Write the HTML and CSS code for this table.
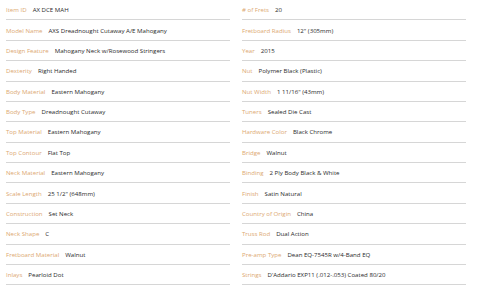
FILE: index.html
```html
<!DOCTYPE html>
<html>
<head>
<meta charset="utf-8">
<link rel="stylesheet" href="styles.css">
</head>
<body>
<div class="specs">
  <div class="col">
    <div class="row"><span class="label">Item ID</span><span class="value">AX DCE MAH</span></div>
    <div class="row"><span class="label">Model Name</span><span class="value">AXS Dreadnought Cutaway A/E Mahogany</span></div>
    <div class="row"><span class="label">Design Feature</span><span class="value">Mahogany Neck w/Rosewood Stringers</span></div>
    <div class="row"><span class="label">Dexterity</span><span class="value">Right Handed</span></div>
    <div class="row"><span class="label">Body Material</span><span class="value">Eastern Mahogany</span></div>
    <div class="row"><span class="label">Body Type</span><span class="value">Dreadnought Cutaway</span></div>
    <div class="row"><span class="label">Top Material</span><span class="value">Eastern Mahogany</span></div>
    <div class="row"><span class="label">Top Contour</span><span class="value">Flat Top</span></div>
    <div class="row"><span class="label">Neck Material</span><span class="value">Eastern Mahogany</span></div>
    <div class="row"><span class="label">Scale Length</span><span class="value">25 1/2" (648mm)</span></div>
    <div class="row"><span class="label">Construction</span><span class="value">Set Neck</span></div>
    <div class="row"><span class="label">Neck Shape</span><span class="value">C</span></div>
    <div class="row"><span class="label">Fretboard Material</span><span class="value">Walnut</span></div>
    <div class="row"><span class="label">Inlays</span><span class="value">Pearloid Dot</span></div>
  </div>
  <div class="col">
    <div class="row"><span class="label"># of Frets</span><span class="value">20</span></div>
    <div class="row"><span class="label">Fretboard Radius</span><span class="value">12" (305mm)</span></div>
    <div class="row"><span class="label">Year</span><span class="value">2015</span></div>
    <div class="row"><span class="label">Nut</span><span class="value">Polymer Black (Plastic)</span></div>
    <div class="row"><span class="label">Nut Width</span><span class="value">1 11/16" (43mm)</span></div>
    <div class="row"><span class="label">Tuners</span><span class="value">Sealed Die Cast</span></div>
    <div class="row"><span class="label">Hardware Color</span><span class="value">Black Chrome</span></div>
    <div class="row"><span class="label">Bridge</span><span class="value">Walnut</span></div>
    <div class="row"><span class="label">Binding</span><span class="value">2 Ply Body Black &amp; White</span></div>
    <div class="row"><span class="label">Finish</span><span class="value">Satin Natural</span></div>
    <div class="row"><span class="label">Country of Origin</span><span class="value">China</span></div>
    <div class="row"><span class="label">Truss Rod</span><span class="value">Dual Action</span></div>
    <div class="row"><span class="label">Pre-amp Type</span><span class="value">Dean EQ-7545R w/4-Band EQ</span></div>
    <div class="row"><span class="label">Strings</span><span class="value">D'Addario EXP11 (.012-.053) Coated 80/20</span></div>
  </div>
</div>
</body>
</html>
```

FILE: styles.css
```css
html, body {
  margin: 0;
  padding: 0;
  background: #ffffff;
}
body {
  font-family: "Open Sans", "Noto Sans", sans-serif;
  font-size: 6.1px;
}
.specs {
  display: grid;
  grid-template-columns: 224px 224px;
  column-gap: 12px;
  padding-left: 6px;
}
.col {
  display: flex;
  flex-direction: column;
}
.row {
  height: 19.38px;
  border-bottom: 1px solid #d6d6d6;
  display: flex;
  align-items: center;
  gap: 6px;
  white-space: nowrap;
}
.label {
  color: #dca871;
}
.value {
  color: #2a2a2a;
}
```
